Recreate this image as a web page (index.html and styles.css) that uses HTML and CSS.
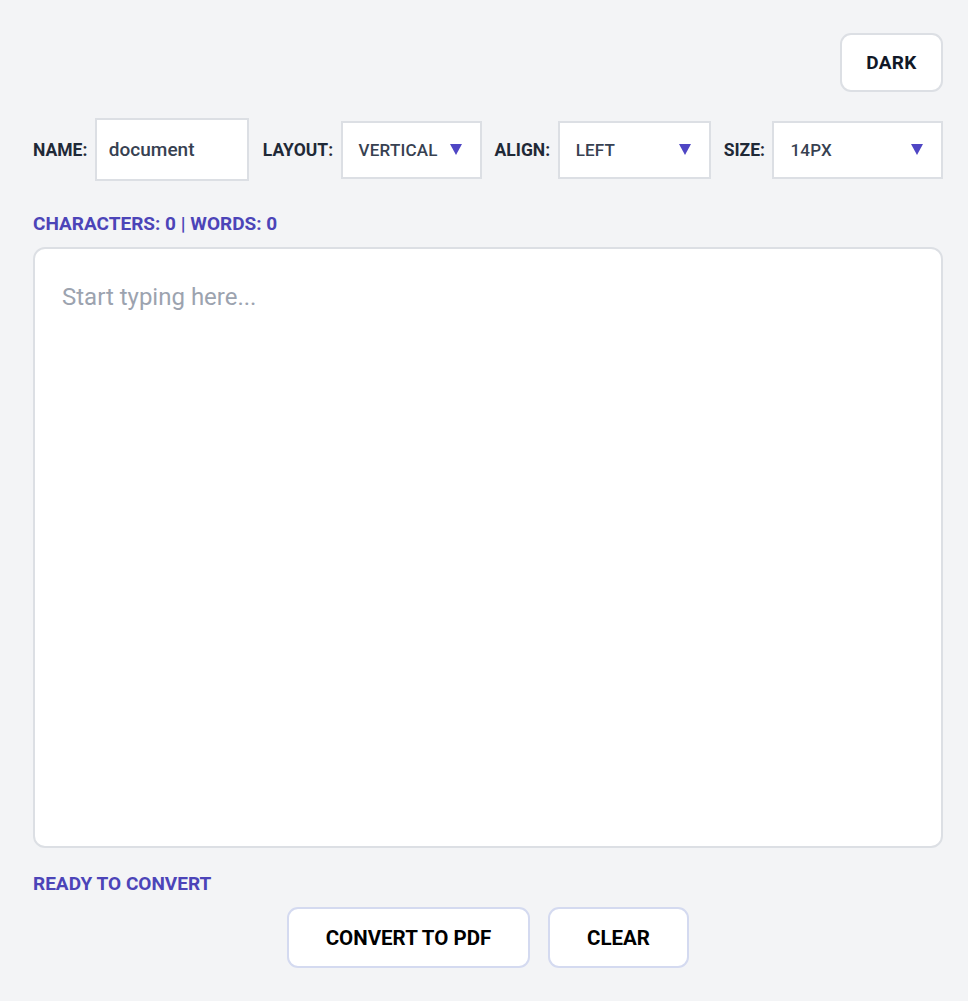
FILE: index.html
```html
<!DOCTYPE html>
<html lang="en">
<head>
    <meta charset="UTF-8">
    <meta name="viewport" content="width=device-width, initial-scale=1.0">
    <title>Text to PDF</title>
    <link rel="stylesheet" href="styles.css">
</head>
<body>
    <div class="app">
        <div class="top-bar">
            <button class="theme-btn" id="theme-btn">DARK</button>
        </div>

        <div class="toolbar">
            <label class="field-label" for="file-name">NAME:</label>
            <input type="text" id="file-name" class="name-input" value="document">

            <label class="field-label">LAYOUT:</label>
            <div class="select select-layout">
                <span>VERTICAL</span>
                <svg class="arrow" width="12" height="11" viewBox="0 0 12 11"><path d="M0 0H12L6 11Z"/></svg>
            </div>

            <label class="field-label">ALIGN:</label>
            <div class="select select-align">
                <span>LEFT</span>
                <svg class="arrow" width="12" height="11" viewBox="0 0 12 11"><path d="M0 0H12L6 11Z"/></svg>
            </div>

            <label class="field-label">SIZE:</label>
            <div class="select select-size">
                <span>14PX</span>
                <svg class="arrow" width="12" height="11" viewBox="0 0 12 11"><path d="M0 0H12L6 11Z"/></svg>
            </div>
        </div>

        <div class="counter" id="counter">CHARACTERS: 0 | WORDS: 0</div>

        <textarea class="editor" id="editor" placeholder="Start typing here..."></textarea>

        <div class="status" id="status">READY TO CONVERT</div>

        <div class="actions">
            <button class="action-btn convert-btn">CONVERT TO PDF</button>
            <button class="action-btn clear-btn" id="clear-btn">CLEAR</button>
        </div>
    </div>

    <script>
        const editor = document.getElementById('editor');
        const counter = document.getElementById('counter');

        editor.addEventListener('input', () => {
            const text = editor.value;
            const words = text.trim() ? text.trim().split(/\s+/).length : 0;
            counter.innerText = `CHARACTERS: ${text.length} | WORDS: ${words}`;
        });

        document.getElementById('clear-btn').addEventListener('click', () => {
            editor.value = '';
            counter.innerText = 'CHARACTERS: 0 | WORDS: 0';
        });
    </script>
</body>
</html>
```

FILE: styles.css
```css
body {
    margin: 0;
    background-color: #f3f4f6;
    font-family: Roboto, "Liberation Sans", sans-serif;
    color: #1f2937;
}
.app {
    padding: 33px 25px 0 33px;
}
.top-bar {
    display: flex;
    justify-content: flex-end;
}
.theme-btn {
    width: 103px;
    height: 59px;
    background-color: #fff;
    border: 2px solid #dcdfe4;
    border-radius: 11px;
    font-family: inherit;
    font-size: 19px;
    font-weight: 700;
    letter-spacing: 0.3px;
    color: #111827;
    cursor: pointer;
}
.toolbar {
    display: flex;
    align-items: center;
    margin-top: 26px;
}
.field-label {
    font-size: 17.5px;
    font-weight: 700;
    color: #1f2937;
    margin-right: 7.5px;
    white-space: nowrap;
}
.name-input {
    flex-shrink: 0;
    box-sizing: border-box;
    width: 154px;
    height: 63px;
    margin-right: 14px;
    padding: 0 12px;
    border: 2px solid #dcdfe4;
    background-color: #fff;
    font-family: inherit;
    font-size: 19px;
    font-weight: 500;
    color: #374151;
    outline: none;
}
.select {
    flex-shrink: 0;
    box-sizing: border-box;
    height: 58px;
    display: flex;
    align-items: center;
    justify-content: space-between;
    padding: 0 18px 0 16px;
    border: 2px solid #dcdfe4;
    background-color: #fff;
    font-size: 17px;
    font-weight: 500;
    letter-spacing: 0.2px;
    color: #374151;
    margin-right: 13px;
}
.select-layout {
    width: 141px;
}
.select-align {
    width: 153px;
}
.select-size {
    flex: 1;
    margin-right: 0;
}
.arrow {
    fill: #4f46c4;
}
.counter {
    margin-top: 31px;
    font-size: 19px;
    font-weight: 700;
    color: #4c44b8;
}
.editor {
    display: block;
    box-sizing: border-box;
    width: 910px;
    height: 601px;
    margin-top: 12px;
    padding: 34px 27px;
    border: 2px solid #dcdfe4;
    border-radius: 12px;
    background-color: #fff;
    font-family: inherit;
    font-size: 24px;
    color: #1f2937;
    resize: none;
    outline: none;
}
.editor::placeholder {
    color: #9ca3af;
}
.status {
    margin-top: 24px;
    font-size: 19px;
    font-weight: 700;
    color: #4c44b8;
}
.actions {
    width: 910px;
    display: flex;
    justify-content: center;
    gap: 18px;
    margin-top: 12px;
}
.action-btn {
    height: 61px;
    background-color: #fff;
    border: 2px solid #d4daf0;
    border-radius: 11px;
    font-family: inherit;
    font-size: 20.5px;
    font-weight: 700;
    color: #000;
    cursor: pointer;
}
.convert-btn {
    width: 243px;
}
.clear-btn {
    width: 141px;
}
```
